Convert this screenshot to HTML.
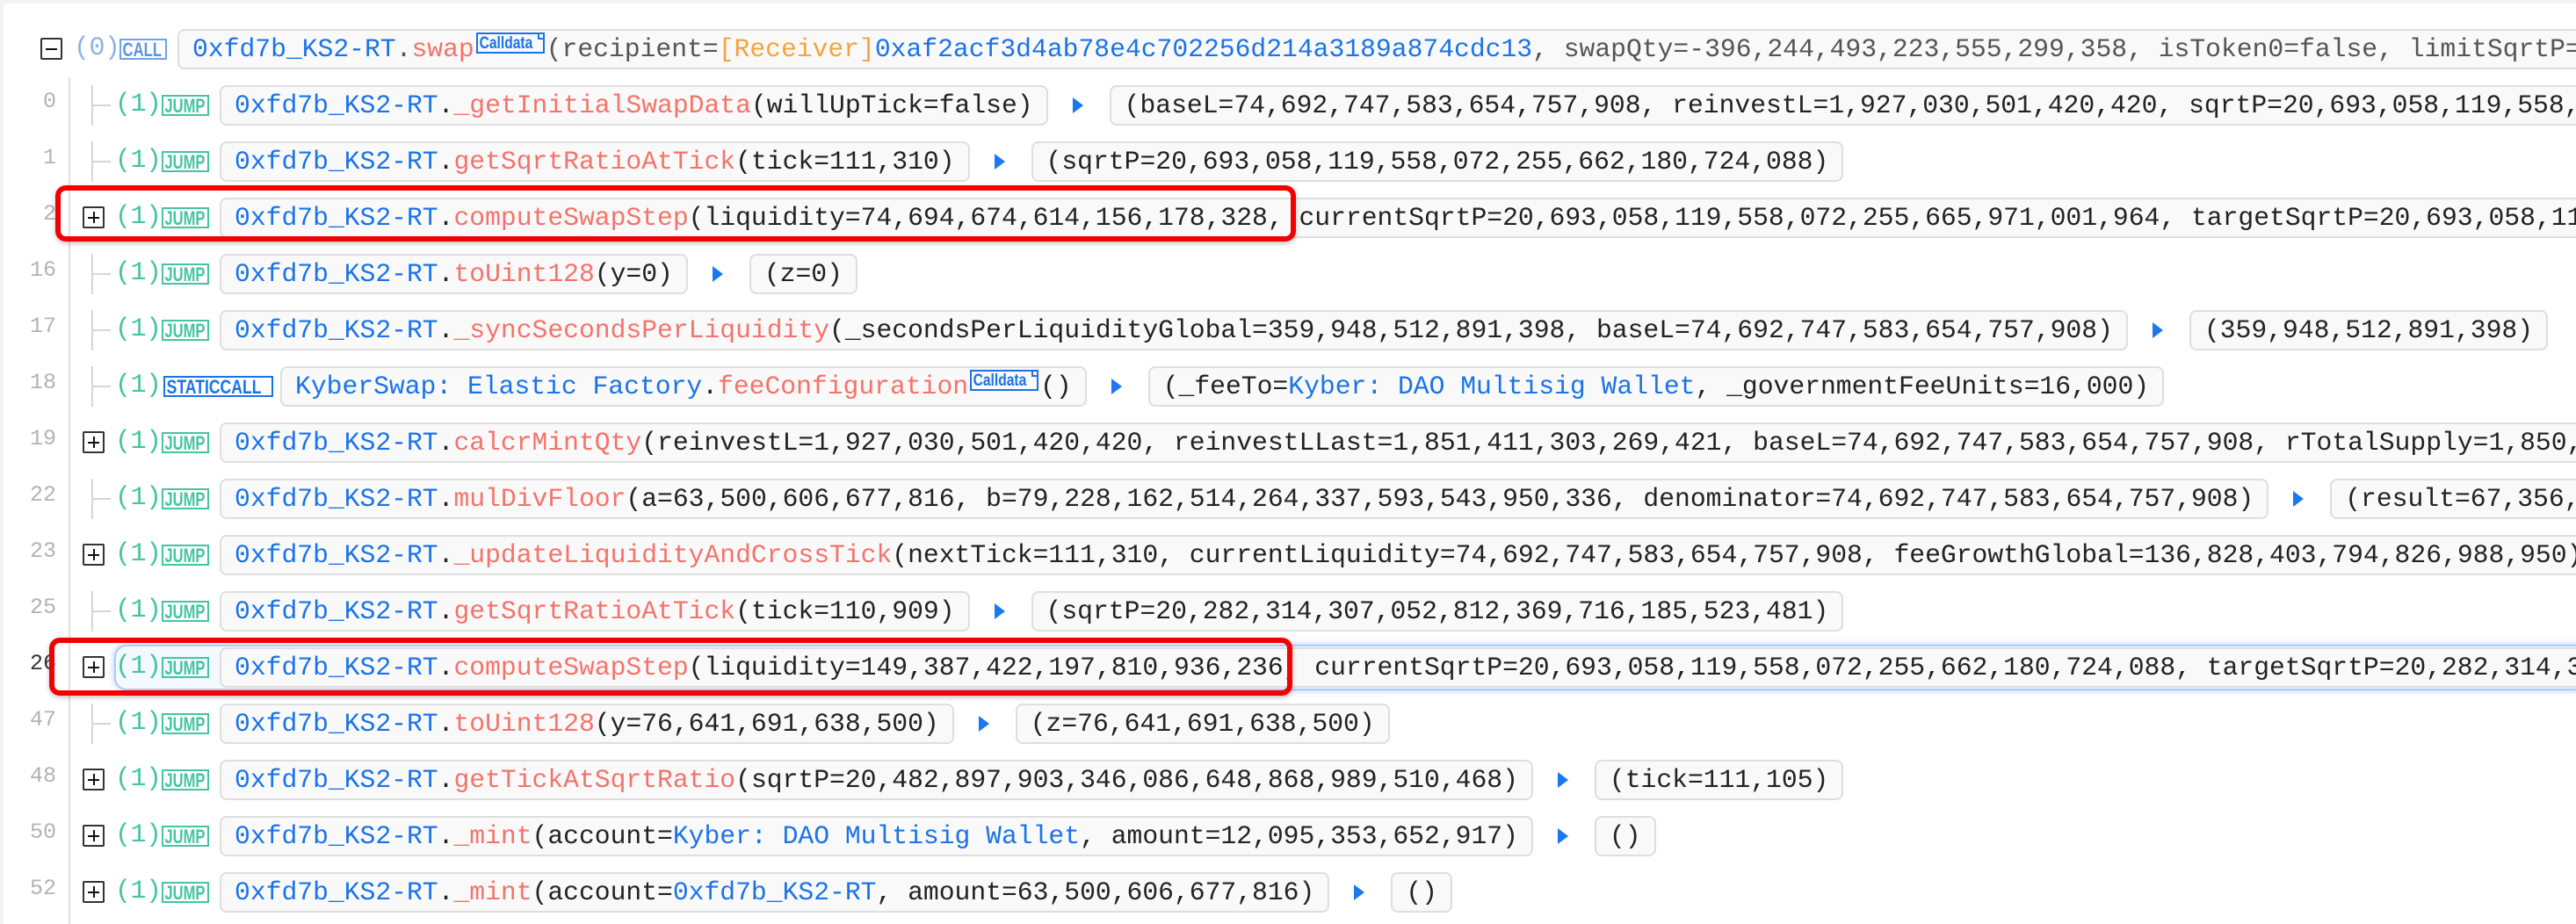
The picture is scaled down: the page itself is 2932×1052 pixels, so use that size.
<!DOCTYPE html>
<html><head><meta charset="utf-8"><style>
html,body{margin:0;padding:0;width:2932px;height:1052px;overflow:hidden;background:#fff;}
body{font-family:"Liberation Mono",monospace;}
#wrap{position:relative;width:2932px;height:1052px;overflow:hidden;}
.topbar{position:absolute;left:0;top:0;width:2932px;height:4px;background:#f1f3f5;}
.leftbar{position:absolute;left:0;top:0;width:4px;height:1052px;background:#f1f3f5;}
.vline{position:absolute;left:78px;top:88px;width:2px;height:964px;background:#e0e0e0;}
.row{position:absolute;left:0;width:2932px;height:46px;overflow:hidden;}
.ln{position:absolute;right:2868px;top:4px;font-size:25px;color:#b3b3b3;font-family:"Liberation Mono",monospace;}
.cv{position:absolute;left:104px;top:-5px;width:2px;height:56px;background:#d6d6d6;}
.ch{position:absolute;left:104px;top:22px;width:22px;height:2px;background:#d6d6d6;}
.pl{position:absolute;left:94px;top:10px;width:21px;height:21px;border:2px solid #333;border-radius:2px;background:#fff;}
.pl:before{content:"";position:absolute;left:4px;top:9.5px;width:13px;height:2px;background:#111;}
.pl:after{content:"";position:absolute;left:9.5px;top:4px;width:2px;height:13px;background:#111;}
.dp{position:absolute;left:131px;top:5px;font-size:30px;color:#45c4a0;letter-spacing:-0.5px;}
.bd{position:absolute;top:11px;width:50px;height:20px;overflow:hidden;border:2px solid #45c4a0;color:#45c4a0;font:bold 22px "Liberation Sans",sans-serif;white-space:nowrap;}
.bd span,.cd span{display:block;height:20px;line-height:21px;transform-origin:0 50%;padding-left:2px;}
.line{position:absolute;left:250px;top:0;display:flex;align-items:center;white-space:nowrap;}
.box{height:42px;line-height:42px;border:2px solid #dedede;border-radius:8px;background:#f9f9f9;padding:0 15px;font-size:29.7px;color:#222;}
.ar{width:0;height:0;border-top:9px solid transparent;border-bottom:9px solid transparent;border-left:12px solid #1a78f0;margin:0 30px 0 28px;flex:none;}
.a{color:#1a73e8;}.f{color:#f4736b;}.o{color:#f5a33c;}
.cd{display:inline-block;width:74px;height:20px;overflow:hidden;border:2px solid #1a73e8;color:#1a73e8;font:bold 19px "Liberation Sans",sans-serif;vertical-align:3px;position:relative;margin:0 2px;white-space:nowrap;line-height:20px;}
.cd span{transform:scaleX(0.82);}
.cd:after{content:"";position:absolute;right:-2px;top:-2px;width:6px;height:6px;background:#fff;border-left:2px solid #1a73e8;border-bottom:2px solid #1a73e8;}
.red{position:absolute;border:6px solid #f40000;border-radius:12px;box-shadow:0 2px 6px rgba(0,0,0,.25);}
.j span{transform:scaleX(0.75);}
</style></head><body><div id="wrap">
<div class="topbar"></div><div class="leftbar"></div>
<div class="vline"></div>

<div class="row" style="top:33px">
  <div style="position:absolute;left:46px;top:10px;width:25px;height:25px;border:2px solid #333;border-radius:2px;background:#fff;box-sizing:border-box"><div style="position:absolute;left:4px;top:10px;width:13px;height:2px;background:#111"></div></div>
  <div class="dp" style="left:84px;color:#8bb3e8">(0)</div>
  <div class="bd" style="left:136px;border-color:#6ea3e6;color:#5a95e0"><span style="transform:scaleX(0.76)">CALL</span></div>
  <div class="line" style="left:202px"><div class="box" style="color:#555"><span class="a">0xfd7b_KS2-RT</span>.<span class="f">swap</span><span class="cd"><span>Calldata</span></span>(recipient=<span class="o">[Receiver]</span><span class="a">0xaf2acf3d4ab78e4c702256d214a3189a874cdc13</span>, swapQty=-396,244,493,223,555,299,358, isToken0=false, limitSqrtP=4,295,128,740)</div></div>
</div>

<div class="row" style="top:97px"><div class="ln">0</div><div class="cv"></div><div class="ch"></div><div class="dp">(1)</div><div class="bd j" style="left:184px"><span>JUMP</span></div>
<div class="line"><div class="box"><span class="a">0xfd7b_KS2-RT</span>.<span class="f">_getInitialSwapData</span>(willUpTick=false)</div><div class="ar"></div><div class="box">(baseL=74,692,747,583,654,757,908, reinvestL=1,927,030,501,420,420, sqrtP=20,693,058,119,558,072,255,662,180,724,088)</div></div></div>

<div class="row" style="top:161px"><div class="ln">1</div><div class="cv"></div><div class="ch"></div><div class="dp">(1)</div><div class="bd j" style="left:184px"><span>JUMP</span></div>
<div class="line"><div class="box"><span class="a">0xfd7b_KS2-RT</span>.<span class="f">getSqrtRatioAtTick</span>(tick=111,310)</div><div class="ar"></div><div class="box">(sqrtP=20,693,058,119,558,072,255,662,180,724,088)</div></div></div>

<div class="row" style="top:225px"><div class="ln">2</div><div class="pl"></div><div class="dp">(1)</div><div class="bd j" style="left:184px"><span>JUMP</span></div>
<div class="line"><div class="box"><span class="a">0xfd7b_KS2-RT</span>.<span class="f">computeSwapStep</span>(liquidity=74,694,674,614,156,178,328, currentSqrtP=20,693,058,119,558,072,255,665,971,001,964, targetSqrtP=20,693,058,119,558,072,255,662,180,724,088)</div></div></div>

<div class="row" style="top:289px"><div class="ln">16</div><div class="cv"></div><div class="ch"></div><div class="dp">(1)</div><div class="bd j" style="left:184px"><span>JUMP</span></div>
<div class="line"><div class="box"><span class="a">0xfd7b_KS2-RT</span>.<span class="f">toUint128</span>(y=0)</div><div class="ar"></div><div class="box">(z=0)</div></div></div>

<div class="row" style="top:353px"><div class="ln">17</div><div class="cv"></div><div class="ch"></div><div class="dp">(1)</div><div class="bd j" style="left:184px"><span>JUMP</span></div>
<div class="line"><div class="box"><span class="a">0xfd7b_KS2-RT</span>.<span class="f">_syncSecondsPerLiquidity</span>(_secondsPerLiquidityGlobal=359,948,512,891,398, baseL=74,692,747,583,654,757,908)</div><div class="ar"></div><div class="box">(359,948,512,891,398)</div></div></div>

<div class="row" style="top:417px"><div class="ln">18</div><div class="cv"></div><div class="ch"></div><div class="dp">(1)</div><div class="bd" style="left:186px;width:121px;border-color:#1a73e8;color:#1a73e8"><span style="transform:scaleX(0.8)">STATICCALL</span></div>
<div class="line" style="left:319px"><div class="box"><span class="a">KyberSwap: Elastic Factory</span>.<span class="f">feeConfiguration</span><span class="cd"><span>Calldata</span></span>()</div><div class="ar"></div><div class="box">(_feeTo=<span class="a">Kyber: DAO Multisig Wallet</span>, _governmentFeeUnits=16,000)</div></div></div>

<div class="row" style="top:481px"><div class="ln">19</div><div class="pl"></div><div class="dp">(1)</div><div class="bd j" style="left:184px"><span>JUMP</span></div>
<div class="line"><div class="box"><span class="a">0xfd7b_KS2-RT</span>.<span class="f">calcrMintQty</span>(reinvestL=1,927,030,501,420,420, reinvestLLast=1,851,411,303,269,421, baseL=74,692,747,583,654,757,908, rTotalSupply=1,850,000,000)</div></div></div>

<div class="row" style="top:545px"><div class="ln">22</div><div class="cv"></div><div class="ch"></div><div class="dp">(1)</div><div class="bd j" style="left:184px"><span>JUMP</span></div>
<div class="line"><div class="box"><span class="a">0xfd7b_KS2-RT</span>.<span class="f">mulDivFloor</span>(a=63,500,606,677,816, b=79,228,162,514,264,337,593,543,950,336, denominator=74,692,747,583,654,757,908)</div><div class="ar"></div><div class="box">(result=67,356,000,000)</div></div></div>

<div class="row" style="top:609px"><div class="ln">23</div><div class="pl"></div><div class="dp">(1)</div><div class="bd j" style="left:184px"><span>JUMP</span></div>
<div class="line"><div class="box"><span class="a">0xfd7b_KS2-RT</span>.<span class="f">_updateLiquidityAndCrossTick</span>(nextTick=111,310, currentLiquidity=74,692,747,583,654,757,908, feeGrowthGlobal=136,828,403,794,826,988,950)</div></div></div>

<div class="row" style="top:673px"><div class="ln">25</div><div class="cv"></div><div class="ch"></div><div class="dp">(1)</div><div class="bd j" style="left:184px"><span>JUMP</span></div>
<div class="line"><div class="box"><span class="a">0xfd7b_KS2-RT</span>.<span class="f">getSqrtRatioAtTick</span>(tick=110,909)</div><div class="ar"></div><div class="box">(sqrtP=20,282,314,307,052,812,369,716,185,523,481)</div></div></div>

<div style="position:absolute;left:130px;top:734px;width:2810px;height:48px;border:2px solid #a9cdf6;border-radius:14px;background:#f4f9ff;box-shadow:0 0 8px rgba(26,115,232,.35)"></div>
<div class="row" style="top:737px"><div class="ln" style="color:#333">26</div><div class="pl"></div><div class="dp">(1)</div><div class="bd j" style="left:184px"><span>JUMP</span></div>
<div class="line"><div class="box"><span class="a">0xfd7b_KS2-RT</span>.<span class="f">computeSwapStep</span>(liquidity=149,387,422,197,810,936,236, currentSqrtP=20,693,058,119,558,072,255,662,180,724,088, targetSqrtP=20,282,314,307,052,812)</div></div></div>

<div class="row" style="top:801px"><div class="ln">47</div><div class="cv"></div><div class="ch"></div><div class="dp">(1)</div><div class="bd j" style="left:184px"><span>JUMP</span></div>
<div class="line"><div class="box"><span class="a">0xfd7b_KS2-RT</span>.<span class="f">toUint128</span>(y=76,641,691,638,500)</div><div class="ar"></div><div class="box">(z=76,641,691,638,500)</div></div></div>

<div class="row" style="top:865px"><div class="ln">48</div><div class="pl"></div><div class="dp">(1)</div><div class="bd j" style="left:184px"><span>JUMP</span></div>
<div class="line"><div class="box"><span class="a">0xfd7b_KS2-RT</span>.<span class="f">getTickAtSqrtRatio</span>(sqrtP=20,482,897,903,346,086,648,868,989,510,468)</div><div class="ar"></div><div class="box">(tick=111,105)</div></div></div>

<div class="row" style="top:929px"><div class="ln">50</div><div class="pl"></div><div class="dp">(1)</div><div class="bd j" style="left:184px"><span>JUMP</span></div>
<div class="line"><div class="box"><span class="a">0xfd7b_KS2-RT</span>.<span class="f">_mint</span>(account=<span class="a">Kyber: DAO Multisig Wallet</span>, amount=12,095,353,652,917)</div><div class="ar"></div><div class="box">()</div></div></div>

<div class="row" style="top:993px"><div class="ln">52</div><div class="pl"></div><div class="dp">(1)</div><div class="bd j" style="left:184px"><span>JUMP</span></div>
<div class="line"><div class="box"><span class="a">0xfd7b_KS2-RT</span>.<span class="f">_mint</span>(account=<span class="a">0xfd7b_KS2-RT</span>, amount=63,500,606,677,816)</div><div class="ar"></div><div class="box">()</div></div></div>

<div class="red" style="left:63px;top:211px;width:1400px;height:52px"></div>
<div class="red" style="left:56px;top:726px;width:1403px;height:54px"></div>
</div></body></html>
